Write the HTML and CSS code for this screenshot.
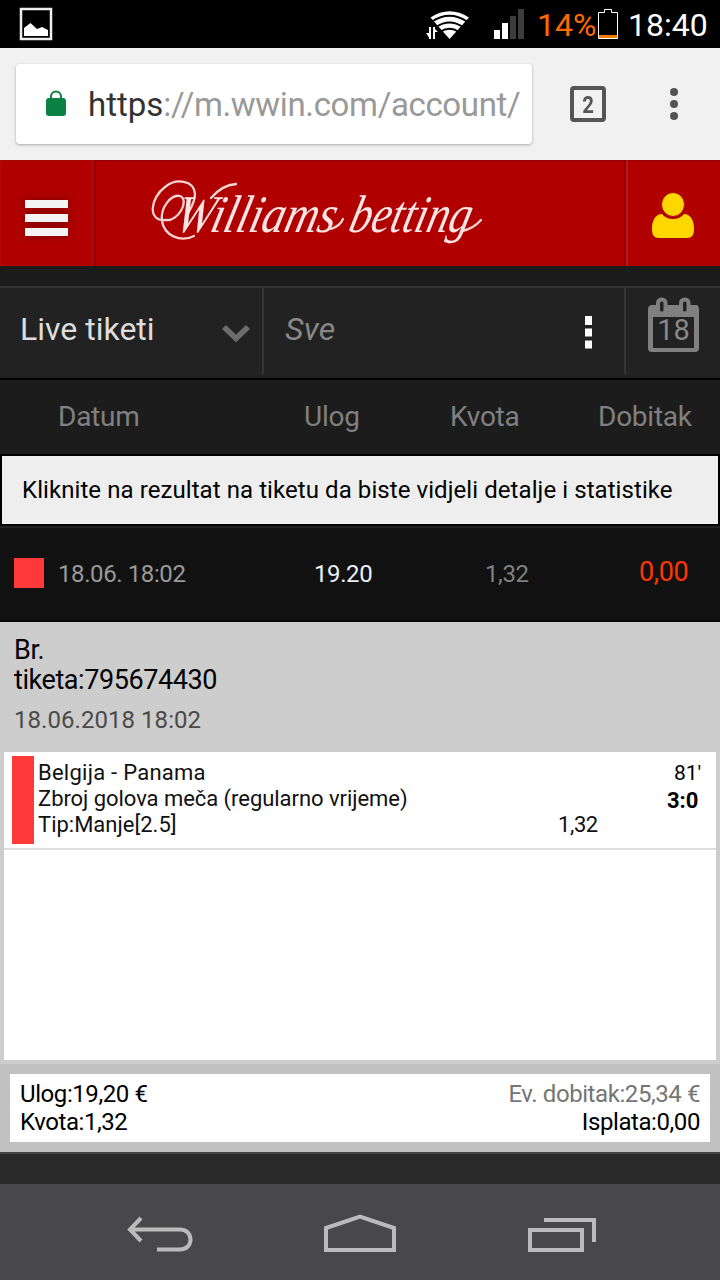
FILE: index.html
```html
<!DOCTYPE html>
<html lang="bs">
<head>
<meta charset="utf-8">
<title>Williams betting</title>
<link rel="stylesheet" href="styles.css">
</head>
<body>
<div class="status">
  <svg class="status-photo" width="34" height="34" viewBox="0 0 34 34"><rect x="1" y="1" width="30" height="30" fill="none" stroke="#eee" stroke-width="2.500"/><path d="M4 20L10.500 15L17 21L22 19L28 22V28H4Z" fill="#fff"/></svg>
  <svg class="status-wifi" width="44" height="30" viewBox="0 0 44 30">
    <path d="M4.500 6.500Q23.500-6 43 6.500L23.500 28Z" fill="#fff"/>
    <path d="M6 10.500Q23.500-1 41 10.500M10 16Q23.500 7 37 16M14 21Q23.500 14.500 33 21" fill="none" stroke="#000" stroke-width="1.800"/>
    <path d="M0 17H12V30H0Z" fill="#000"/>
    <path d="M4 16V28M8 16V28" stroke="#fff" stroke-width="2"/><path d="M0 22H5V28H4ZM7 16L12 21H7Z" fill="#fff"/>
  </svg>
  <svg class="status-signal" width="30" height="30" viewBox="0 0 30 30"><path d="M0 21h6v9H0zM8 14h6v16H8z" fill="#fff"/><path d="M16 7h6v23h-6zM24 0h6v30h-6z" fill="#3d3d3d"/></svg>
  <span class="status-percent">14%</span>
  <svg class="status-battery" width="20" height="30" viewBox="0 0 20 30"><path d="M.5 3.500h6v-3h7v3h6v26H.5z" fill="none" stroke="#fff"/><path d="M1 26h18v3H1z" fill="#f57c00"/></svg>
  <span class="status-time">18:40</span>
</div>

<div class="browser">
  <div class="omnibox">
    <svg class="lock" width="20" height="27" viewBox="0 0 20 27"><rect y="8" width="20" height="18" rx="3" fill="#0b8043"/><path d="M5 9V6.500a5 5 0 0 1 10 0V9" fill="none" stroke="#0b8043" stroke-width="2"/></svg>
    <span class="url"><span class="scheme">https</span>://m.wwin.com/account/</span>
  </div>
  <div class="tabs"><span>2</span></div>
  <svg class="more" width="8" height="32" viewBox="0 0 8 32"><g fill="#555"><circle cx="4" cy="4" r="4"/><circle cx="4" cy="16" r="4"/><circle cx="4" cy="28" r="4"/></g></svg>
</div>

<header class="site">
  <div class="site-menu"><svg width="60" height="52" viewBox="0 0 60 52"><g class="soft-shadow" fill="#f3f3f3"><path d="M8 8h43v8H8zM8 22h43v8H8zM8 36h43v8H8z"/></g></svg></div>
  <div class="site-brand">
    <svg width="360" height="100" viewBox="0 0 360 100">
      <g fill="none" stroke="#f6d4d4" stroke-width="2.300" stroke-linecap="round">
        <path d="M54 71C40 78 24 70 22 56C20 43 31 29 40 31C50 35 38 57 26 55C7 57 10 33 25 22C36 13 54 15 55 29C55 38 50 44 47 50"/>
        <path d="M71 33Q82 20 96 19"/>
        <path d="M191 64Q200 61 203 54M322 66Q333 64 341 55"/>
      </g>
      <g transform="translate(0 67) skewX(-14)">
        <text class="brand-text" x="33" y="0" textLength="160" lengthAdjust="spacingAndGlyphs">Williams</text>
        <text class="brand-text" x="207" y="0" textLength="121" lengthAdjust="spacingAndGlyphs">betting</text>
      </g>
    </svg>
  </div>
  <div class="site-user"><svg width="44" height="48" viewBox="0 0 44 48"><path d="M10 22Q14 27 21 27Q28 27 32 22C39 22 42 29 42 37C42 43 40 46 35 46H7C2 46 0 43 0 37C0 29 3 22 10 22Z" fill="#ffd700"/><ellipse cx="21" cy="12.500" rx="11.500" ry="12" fill="#ffd700" stroke="#b00000" stroke-width="1"/></svg></div>
</header>

<div class="filters">
  <div class="filter-type"><span class="type-label">Live tiketi</span><svg width="28" height="20" viewBox="0 0 28 20"><path class="chevron" d="M2 4L14 15.500L26 4" fill="none" stroke="#6c6c6c" stroke-width="5.500"/></svg></div>
  <div class="filter-status"><span class="sve">Sve</span><svg width="8" height="34" viewBox="0 0 8 34"><path d="M0 0h7v9H0zM0 12.500h7v8H0zM0 24.500h7v8H0z" fill="#fff"/></svg></div>
  <div class="filter-date"><svg width="52" height="56" viewBox="0 0 52 56"><path d="M3 8H49Q51 9 51 12V51Q51 55 47 55H4Q0 55 0 51V12Q0 9 3 8ZM5 20V51H46V20Z" fill="#808080" fill-rule="evenodd"/><rect x="10" y="2.500" width="7.500" height="14" rx="3.500" fill="#222" stroke="#808080" stroke-width="4"/><rect x="33" y="2.500" width="7.500" height="14" rx="3.500" fill="#222" stroke="#808080" stroke-width="4"/><text class="day" x="25.500" y="43" text-anchor="middle">18</text></svg></div>
</div>

<div class="columns"><span class="c-date">Datum</span><span class="c-stake">Ulog</span><span class="c-odds">Kvota</span><span class="c-win">Dobitak</span></div>

<div class="notice"><span>Kliknite na rezultat na tiketu da biste vidjeli detalje i statistike</span></div>

<div class="ticket-row">
  <i class="flag"></i>
  <span class="r-date">18.06. 18:02</span><span class="r-stake">19.20</span><span class="r-odds">1,32</span><span class="r-win">0,00</span>
</div>

<section class="ticket">
  <div class="ticket-head">
    <div class="ticket-no">Br.<br>tiketa:795674430</div>
    <div class="ticket-time">18.06.2018 18:02</div>
  </div>
  <div class="bets">
    <div class="bet">
      <i class="bet-flag"></i>
      <div class="bet-info"><span class="teams">Belgija - Panama</span><br><span class="market">Zbroj golova meča (regularno vrijeme)</span><br><span class="tip">Tip:Manje[2.5]</span></div>
      <div class="bet-odds">1,32</div>
      <div class="bet-score"><div class="minute">81'</div><div class="score">3:0</div></div>
    </div>
  </div>
</section>
<footer class="totals">
  <div class="totals-box">
    <div><span class="t-stake">Ulog:19,20 €</span><br><span class="t-odds">Kvota:1,32</span></div>
    <div class="totals-right"><span class="t-possible">Ev. dobitak:25,34 €</span><br><span class="t-paid">Isplata:0,00</span></div>
  </div>
</footer>
<div class="page-end"></div>

<nav class="android">
  <svg width="66" height="36" viewBox="0 0 66 36"><path d="M14 4L3 15.500L14 27M3 15.500H53C67 15.500 67 35.500 53 35.500H30" fill="none" stroke="#bbb" stroke-width="4"/></svg>
  <svg width="72" height="38" viewBox="0 0 72 38"><path d="M2 36V14L36 2.500L70 14V36Z" fill="none" stroke="#bbb" stroke-width="4"/></svg>
  <svg width="68" height="34" viewBox="0 0 68 34"><path d="M2 12H54V32H2ZM16 2H66V24" fill="none" stroke="#bbb" stroke-width="4"/></svg>
</nav>
</body>
</html>
```
FILE: styles.css
```css
* { box-sizing: border-box; }
body { margin: 0; width: 720px; height: 1280px; overflow: hidden; background: #1c1c1c; font-family: Roboto, "Noto Sans", sans-serif; }
svg { display: block; flex: none; overflow: visible; }
span { white-space: nowrap; }
i { display: block; flex: none; }

.status { height: 48px; background: #000; display: flex; align-items: flex-start; padding-left: 20px; font-size: 32px; line-height: 50px; }
.status-photo { margin-top: 8px; }
.status-wifi { margin: 11px 0 0 372px; }
.status-signal { margin: 9px 0 0 24px; }
.status-percent { width: 60px; margin-left: 13px; color: #ff6a00; }
.status-battery { margin: 9px 0 0 1px; }
.status-time { margin-left: 10px; color: #fff; }

.browser { height: 112px; background: #f1f1f1; display: flex; align-items: center; padding-left: 16px; }
.omnibox { width: 516px; height: 80px; background: #fff; border-radius: 4px; box-shadow: 0 1px 3px rgba(0,0,0,.3); display: flex; align-items: center; padding-left: 30px; }
.lock { margin-top: -2px; }
.url { width: 430px; margin-left: 22px; padding-top: 1px; font-size: 33px; line-height: 48px; letter-spacing: -.35px; color: #999; }
.scheme { color: #333; letter-spacing: 0; }
.tabs { width: 36px; height: 36px; margin-left: 38px; border: 4px solid #555; border-radius: 4px; font-size: 24px; line-height: 30px; font-weight: 700; color: #555; text-align: center; }
.tabs span { display: block; transform: scaleX(.85); }
.more { margin-left: 64px; }

.site { height: 106px; background: #b00000; display: flex; box-shadow: inset 0 1px 0 #900000; }
.site-menu { width: 96px; padding: 32px 0 0 17px; border-right: 2px solid #8b0000; box-shadow: inset 0 0 3px #c41212; }
.soft-shadow { filter: drop-shadow(0 0 3px #700000); }
.site-brand { width: 530px; padding: 5px 0 0 44px; border-right: 2px solid #8b0000; }
.brand-text { font: italic 53px "Liberation Serif", serif; fill: #fbe4e4; }
.site-user { flex: 1; border-left: 2px solid #c41414; padding: 32px 0 0 24px; }

.filters { height: 94px; margin-top: 20px; background: #222; border-top: 2px solid #333; border-bottom: 2px solid #000; display: flex; align-items: flex-start; }
.filter-type, .filter-status { height: 86px; border-right: 2px solid #363636; display: flex; font-size: 32px; line-height: 82px; }
.filter-type { width: 264px; padding-left: 20px; color: #ddd; }
.filter-type .type-label { width: 202px; }
.filter-type svg { margin-top: 35px; }
.chevron { filter: blur(.5px); }
.filter-status { width: 362px; padding-left: 21px; color: #888; font-style: italic; }
.filter-status .sve { width: 300px; letter-spacing: .3px; }
.filter-status svg { margin-top: 28px; }
.filter-date { padding: 9px 0 0 22px; }
.day { font-size: 29px; fill: #888; }

.columns { height: 74px; display: grid; grid-template-columns: 246px 146px 148px 1fr; padding-left: 58px; font-size: 28px; line-height: 74px; letter-spacing: -.25px; color: #808080; }
.notice { height: 72px; border: 2px solid #000; background: #eee; padding-left: 20px; font-size: 24px; line-height: 69px; letter-spacing: .075px; color: #000; }
.ticket-row { height: 96px; background: #111; border-top: 2px solid #222; border-bottom: 2px solid #080808; display: grid; grid-template-columns: 44px 256px 171px 154px 1fr; padding-left: 14px; font-size: 24px; line-height: 93px; letter-spacing: -.4px; color: #808080; }
.flag { width: 30px; height: 30px; margin-top: 30px; background: #ff3838; }
.r-date { color: #999; }
.r-stake { color: #e8f0f4; }
.r-win { font-size: 27px; line-height: 88px; color: #ff3600; }

.ticket { height: 442px; background: #cdcdcd; padding: 0 4px 4px; display: flex; flex-direction: column; }
.ticket-head { height: 130px; padding: 13px 10px 0; }
.ticket-no { font-size: 27px; line-height: 30px; letter-spacing: -.43px; color: #000; }
.ticket-time { margin-top: 11px; font-size: 24px; line-height: 28px; letter-spacing: .05px; color: #4a4a4a; }
.bets { flex: 1; background: #fff; }
.bet { height: 98px; border-bottom: 2px solid #ddd; display: flex; padding: 4px 0 0 8px; color: #111; font-size: 22px; line-height: 26px; }
.bet-flag { width: 22px; height: 88px; margin-right: 4px; background: #ff3838; }
.bet-info { width: 520px; padding-top: 4px; }
.teams { letter-spacing: .25px; }
.market { letter-spacing: -.05px; }
.bet-odds { width: 109px; padding-top: 56px; letter-spacing: -.4px; }
.bet-score { color: #000; }
.minute { padding: 4px 0 0 7px; font-size: 21px; }
.score { padding-top: 2px; font-weight: 700; }

.totals { height: 88px; padding: 10px; background: #c1c1c1; }
.totals-box { height: 68px; background: #fff; padding: 6px 10px; display: flex; justify-content: space-between; font-size: 24px; line-height: 28px; letter-spacing: -.42px; color: #000; }
.totals-right { text-align: right; }
.t-possible { color: #757575; }
.page-end { height: 32px; background: #2a2a2a; border-top: 2px solid #444; }

.android { height: 96px; background: #48484a; display: flex; padding: 30px 0 0 127px; }
.android svg:nth-child(2) { margin-left: 131px; }
.android svg:nth-child(3) { margin: 4px 0 0 132px; }
```
